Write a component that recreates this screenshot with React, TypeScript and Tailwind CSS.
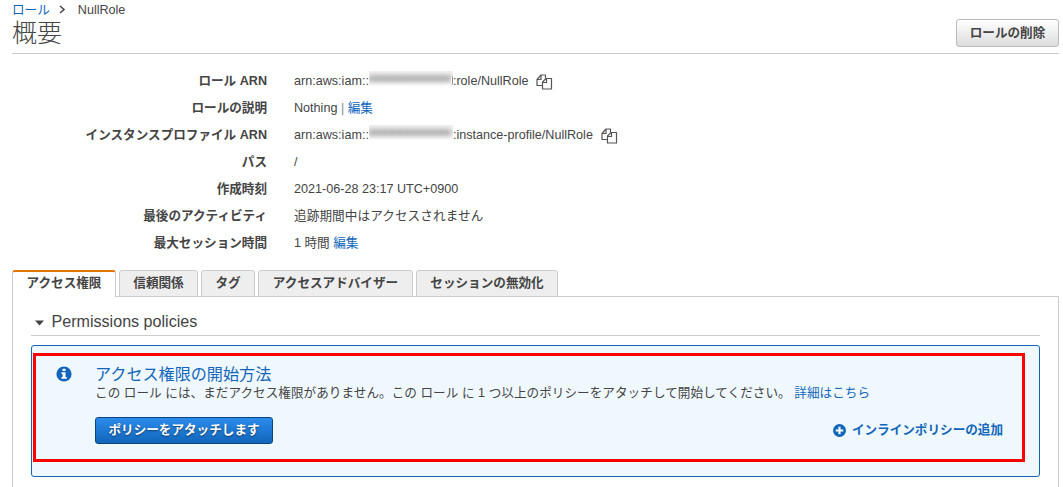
import React from "react";

const CopyIcon = ({ className = "" }: { className?: string }) => (
  <svg className={className} width="17" height="17" viewBox="0 0 17 17" fill="none" stroke="#555" strokeWidth="1.2" strokeLinejoin="round">
    <path d="M6.5 11.5H1V5.5L5 1H9.5V4.5" />
    <path d="M5 1V5.5H1" />
    <path d="M6.5 8L10 4.5H15.5V15H6.5Z" fill="#fff" />
    <path d="M10.5 4.5V8.5H6.5" />
  </svg>
);

const Redacted = ({ tail = false }: { tail?: boolean }) => (
  <span className="relative -mt-[5px] flex h-[15px] w-[84px] items-center overflow-hidden bg-linear-to-b from-[#f4f4f4] via-[#f2f2f2] to-white">
    <span className="h-[7px] w-[82px] bg-[repeating-linear-gradient(90deg,#aaa_0_5px,#c0c0c0_5px_7px)] blur-[2.5px]" />
    {tail && <span className="absolute top-[5px] right-0 h-[9px] w-[2px] rounded-r-full border-r border-[#888] bg-white" />}
  </span>
);

const Link = ({ children }: { children: React.ReactNode }) => (
  <a className="text-[#1166bb]">{children}</a>
);

const Row = ({ label, children }: { label: string; children: React.ReactNode }) => (
  <div className="flex h-[27px] items-center">
    <div className="w-[255px] text-right font-bold">{label}</div>
    <div className="ml-[27px] flex items-center whitespace-pre">{children}</div>
  </div>
);

const tabs = [
  { label: "信頼関係", width: "w-[79px]" },
  { label: "タグ", width: "w-[54px]" },
  { label: "アクセスアドバイザー", width: "w-[155px]" },
  { label: "セッションの無効化", width: "w-[142px]" },
];

export default function App() {
  return (
    <div className="h-[487px] w-[1063px] overflow-hidden bg-white pl-3 pr-1 font-['Liberation_Sans','Noto_Sans_CJK_JP',sans-serif] text-[12.6px] leading-[18px] whitespace-nowrap text-[#444]">
      <header className="flex h-[54px] justify-between border-b border-[#ccc]">
        <div>
          <nav className="flex h-[19px] items-center">
            <Link>ロール</Link>
            <svg className="ml-[9px]" width="7" height="9" viewBox="0 0 7 9" fill="none" stroke="#444" strokeWidth="1.5">
              <path d="M1 1L5 4.5L1 8" />
            </svg>
            <span className="ml-[12px]">NullRole</span>
          </nav>
          <h1 className="text-[25px] leading-[28px] font-light">概要</h1>
        </div>
        <button className="mt-[19px] h-[28px] w-[103px] rounded-[3px] border border-[#bbb] bg-linear-to-b from-white to-[#ddd] pb-px font-bold">
          ロールの削除
        </button>
      </header>

      <section className="h-[216px] pt-[13px]">
        <Row label="ロール ARN">
          arn:aws:iam::<Redacted tail />:role/NullRole
          <CopyIcon className="ml-2 mt-[3px]" />
        </Row>
        <Row label="ロールの説明">
          Nothing <span className="text-[#888]">| </span><Link>編集</Link>
        </Row>
        <Row label="インスタンスプロファイル ARN">
          arn:aws:iam::<Redacted />:instance-profile/NullRole
          <CopyIcon className="ml-2 mt-[3px]" />
        </Row>
        <Row label="パス">/</Row>
        <Row label="作成時刻">2021-06-28 23:17 UTC+0900</Row>
        <Row label="最後のアクティビティ"><span className="tracking-[0.1px]">追跡期間中はアクセスされません</span></Row>
        <Row label="最大セッション時間">1 時間 <Link>編集</Link></Row>
      </section>

      <div className="relative z-10 flex h-[27px] gap-[3px] font-bold">
        <div className="flex h-[27px] w-[104px] justify-center rounded-t-[3px] border-x border-t-2 border-x-[#ccc] border-t-[#e07700] bg-white pt-[2px]">
          アクセス権限
        </div>
        {tabs.map((t) => (
          <div key={t.label} className={`${t.width} flex justify-center rounded-t-[3px] border border-[#ccc] bg-[#eee] pt-[3px]`}>
            {t.label}
          </div>
        ))}
      </div>

      <main className="-mt-px h-[200px] border border-[#ccc] px-[18px]">
        <div className="flex h-[39px] items-center border-b border-[#ccc] pt-[10px]">
          <svg className="ml-[4px] mt-[4px]" width="9" height="6" viewBox="0 0 9 6">
            <path d="M0 0.5H9L4.5 5.5Z" fill="#444" />
          </svg>
          <h2 className="-mt-px ml-[7.5px] text-[16.1px]">Permissions policies</h2>
        </div>
        <div className="relative mt-[9px] flex h-[132px] rounded-[3px] border border-[#1166bb] bg-[#f0f8ff]">
          <div className="pointer-events-none absolute top-[7px] left-px h-[109px] w-[992px] border-[3px] border-[#f00]" />
          <svg className="mt-[20px] ml-[24px]" width="16" height="16" viewBox="0 0 16 16">
            <circle cx="8" cy="8" r="7.6" fill="#1166bb" />
            <path d="M6.5 2.7H9.5V5H6.5ZM5.5 6.2H9.5V11H10.7V12.8H5.5V11H6.6V8H5.5Z" fill="#fff" />
          </svg>
          <div className="ml-[23px] flex-1 pt-[18px]">
            <h3 className="text-[16.1px] leading-[20px] text-[#1166bb]">アクセス権限の開始方法</h3>
            <p className="tracking-[0.04px]">
              この ロール には、まだアクセス権限がありません。この ロール に 1 つ以上のポリシーをアタッチして開始してください。 <Link>詳細はこちら</Link>
            </p>
            <div className="mt-[15px] flex items-center justify-between pr-[36px]">
              <button className="h-[27px] w-[178px] rounded-[3px] border border-[#0b4480] bg-linear-to-b from-[#2b8bec] to-[#1166bb] pb-[2px] font-bold text-white text-shadow-[0_1px_2px_#00000080]">
                ポリシーをアタッチします
              </button>
              <a className="flex items-center font-bold text-[#1166bb]">
                <svg className="mr-[6px]" width="13" height="13" viewBox="0 0 12 12">
                  <circle cx="6" cy="6" r="6" fill="#1166bb" />
                  <path d="M5 2.5H7V5H9.5V7H7V9.5H5V7H2.5V5H5Z" fill="#fff" />
                </svg>
                <span className="-mt-[2px]">インラインポリシーの追加</span>
              </a>
            </div>
          </div>
        </div>
      </main>
    </div>
  );
}
